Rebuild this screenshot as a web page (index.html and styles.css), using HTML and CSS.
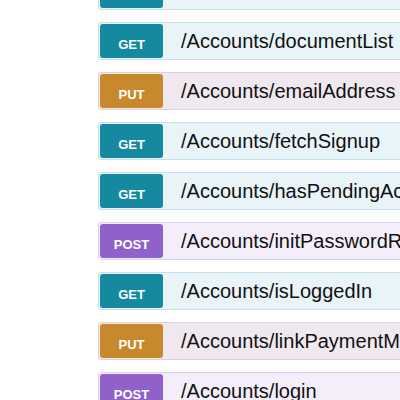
FILE: index.html
```html
<!DOCTYPE html>
<html>
<head>
<meta charset="utf-8">
<link rel="stylesheet" href="styles.css">
</head>
<body>
<div class="list">
  <div class="op get"><span class="method">GET</span><span class="path">/Accounts/count</span></div>
  <div class="op get"><span class="method">GET</span><span class="path">/Accounts/documentList</span></div>
  <div class="op put"><span class="method">PUT</span><span class="path">/Accounts/emailAddress</span></div>
  <div class="op get"><span class="method">GET</span><span class="path">/Accounts/fetchSignup</span></div>
  <div class="op get"><span class="method">GET</span><span class="path">/Accounts/hasPendingActions</span></div>
  <div class="op post"><span class="method">POST</span><span class="path">/Accounts/initPasswordReset</span></div>
  <div class="op get"><span class="method">GET</span><span class="path">/Accounts/isLoggedIn</span></div>
  <div class="op put"><span class="method">PUT</span><span class="path">/Accounts/linkPaymentMethod</span></div>
  <div class="op post"><span class="method">POST</span><span class="path">/Accounts/login</span></div>
</div>
</body>
</html>
```
FILE: styles.css
```css
html, body {
  margin: 0;
  padding: 0;
  background: #ffffff;
  overflow: hidden;
  width: 400px;
  height: 400px;
}
.list {
  margin-top: -28px;
  margin-left: 98px;
  width: 640px;
  display: flex;
  flex-direction: column;
  gap: 12px;
  font-family: "Liberation Sans", Arial, sans-serif;
}
.op {
  display: flex;
  align-items: center;
  height: 36px;
  padding: 0 1px;
  border: 1px solid;
  border-radius: 3px;
}
.method {
  width: 63px;
  height: 34px;
  box-sizing: border-box;
  border-radius: 3px;
  color: #fff;
  font-weight: bold;
  font-size: 13px;
  display: flex;
  align-items: center;
  justify-content: center;
  padding-top: 6px;
}
.path {
  margin-left: 18px;
  font-size: 20px;
  color: #111;
  white-space: nowrap;
}
.get { background: #e8f4f8; border-color: #c4e2ea; }
.get .method { background: #14899f; }
.put { background: #efe9ef; border-color: #dcd0dc; }
.put .method { background: #c8882c; }
.post { background: #f3eefa; border-color: #ddd1f0; }
.post .method { background: #9061c9; }
```
